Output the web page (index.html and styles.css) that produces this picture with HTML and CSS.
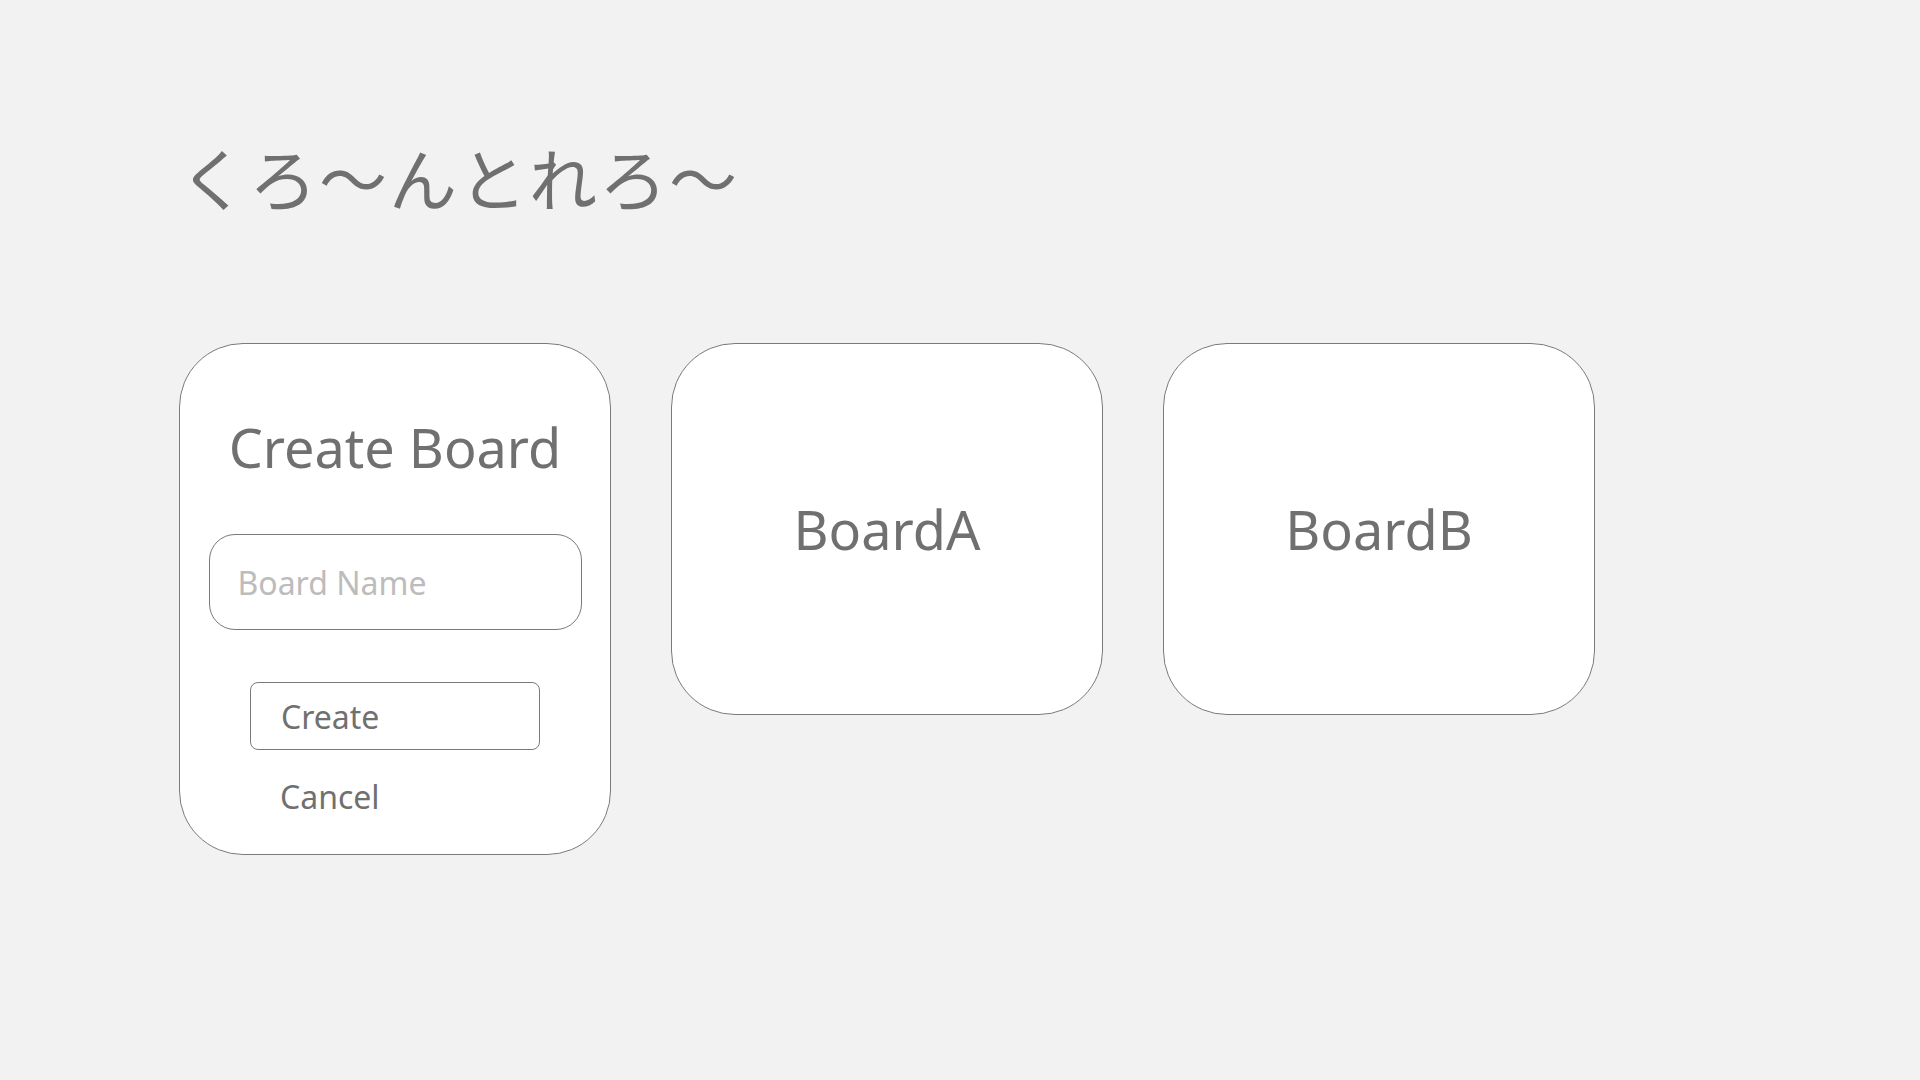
FILE: index.html
```html
<!DOCTYPE html>
<html lang="ja">
<head>
<meta charset="utf-8">
<title>くろ〜んとれろ〜</title>
<link rel="stylesheet" href="styles.css">
</head>
<body>
<main class="page">
  <h1 class="logo">くろ〜んとれろ〜</h1>
  <section class="boards">
    <div class="card card-create">
      <h2 class="create-title">Create Board</h2>
      <input class="name-input" type="text" placeholder="Board Name">
      <button class="btn btn-create" type="button">Create</button>
      <button class="btn btn-cancel" type="button">Cancel</button>
    </div>
    <div class="card card-board">BoardA</div>
    <div class="card card-board">BoardB</div>
  </section>
</main>
</body>
</html>
```

FILE: styles.css
```css
html, body {
  margin: 0;
  padding: 0;
  background: #f2f2f2;
}

body {
  font-family: "Noto Sans", "Noto Sans CJK JP", sans-serif;
  font-weight: 400;
  color: #707070;
}

.page {
  padding: 143px 0 0 179px;
}

.logo {
  margin: 0;
  font-family: "Noto Sans CJK JP", sans-serif;
  font-size: 68px;
  line-height: 1;
  font-weight: 400;
  letter-spacing: 2px;
  color: #707070;
}

.boards {
  margin-top: 132px;
  display: flex;
  align-items: flex-start;
  gap: 60px;
}

.card {
  box-sizing: border-box;
  width: 432px;
  background: #ffffff;
  border: 1px solid #7a7a7a;
  border-radius: 64px;
}

.card-board {
  height: 372px;
  display: flex;
  align-items: center;
  justify-content: center;
  font-size: 54px;
  line-height: 1;
}

.card-create {
  display: flex;
  flex-direction: column;
  align-items: center;
  padding: 76px 0 24px;
}

.create-title {
  margin: 0;
  font-size: 54px;
  line-height: 1;
  font-weight: 400;
}

.name-input {
  box-sizing: border-box;
  margin-top: 60px;
  width: 373px;
  height: 96px;
  padding: 0 0 0 28px;
  border: 1px solid #7a7a7a;
  border-radius: 26px;
  background: #fff;
  font-family: "Noto Sans", sans-serif;
  font-weight: 400;
  font-size: 32px;
  color: #707070;
  outline: none;
}

.name-input::placeholder {
  color: #bcbcbc;
}

.btn {
  box-sizing: border-box;
  width: 290px;
  height: 68px;
  padding: 0 0 0 30px;
  text-align: left;
  font-family: "Noto Sans", sans-serif;
  font-weight: 400;
  font-size: 32px;
  color: #707070;
  background: #fff;
  cursor: pointer;
}

.btn-create {
  margin-top: 52px;
  border: 1px solid #7a7a7a;
  border-radius: 8px;
}

.btn-cancel {
  margin-top: 12px;
  border: none;
}
```
